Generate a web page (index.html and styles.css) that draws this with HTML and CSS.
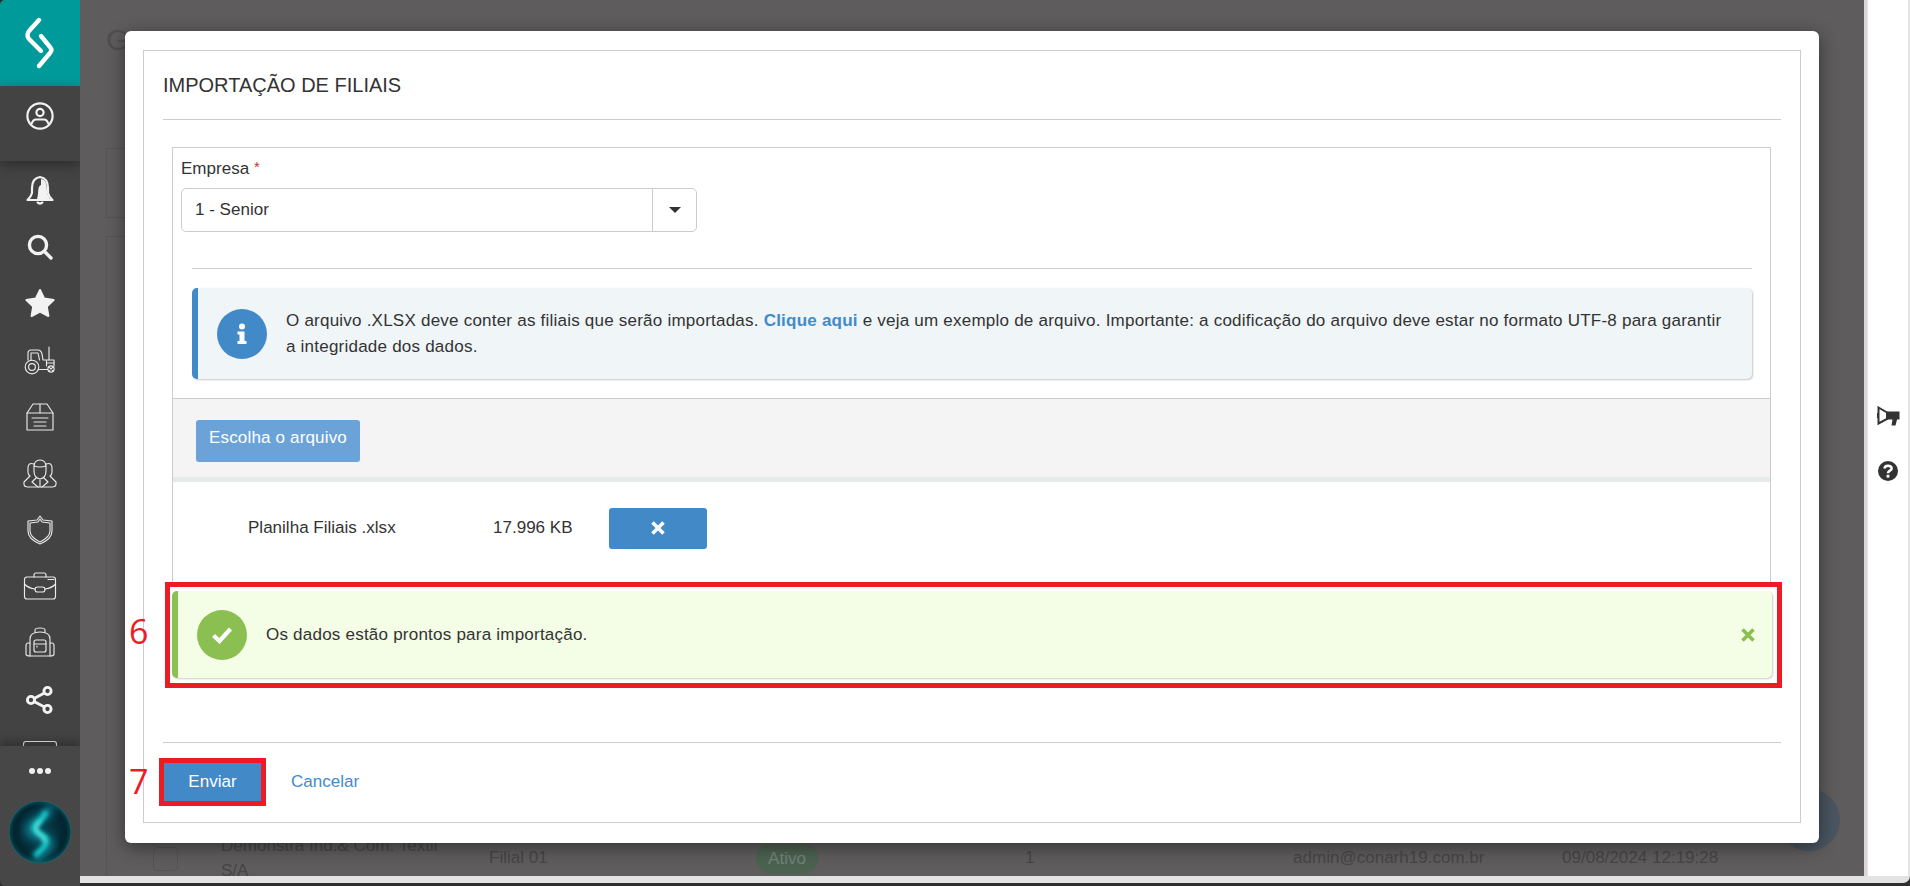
FILE: index.html
```html
<!DOCTYPE html>
<html lang="pt-BR">
<head>
<meta charset="utf-8">
<title>Importação de Filiais</title>
<link rel="stylesheet" href="styles.css">
</head>
<body>
<div class="window">
  <aside class="sidebar">
    <a class="brand">
      <svg width="40" height="56" viewBox="0 0 40 56"><path class="logo-line" d="M19 5 L9 16 Q6 20 9 24 L21 36"/><path class="logo-line" d="M21 21 L30 32 Q33 35 30 38 L19 51"/></svg>
    </a>
    <div class="profile">
      <svg width="30" height="30" viewBox="0 0 30 30"><circle class="ln2" cx="15" cy="15" r="12.6"/><circle class="ln2" cx="15" cy="11.5" r="3.6"/><path class="ln2" d="M6.5 23 Q8 18.5 11 18.5 H19 Q22 18.5 23.5 23"/></svg>
    </div>
    <nav class="nav">
      <div class="nav-item"><svg width="40" height="40" viewBox="0 0 40 40"><path class="ln2" d="M20 7 C26 8 28 12 28 18 V23 Q29 27 32.5 30 H7.5 Q11 27 12 23 V18 C12 12 14 8 20 7 Z"/><path class="fl" d="M21 9 C26 10 27 14 27 23 Q28 26 30 29 H17 C19 24 17 16 21 15 Z"/><path class="ln2" d="M17 32 Q20 35 23 32"/></svg></div>
      <div class="nav-item"><svg width="40" height="40" viewBox="0 0 40 40"><circle class="ln3" cx="18" cy="18" r="8.6"/><path class="ln3" d="M24.5 24.5 L31 31"/></svg></div>
      <div class="nav-item"><svg width="40" height="40" viewBox="0 0 40 40"><path class="fl star" d="M20 7 L24.2 15.6 L33.6 17 L26.8 23.6 L28.4 33 L20 28.6 L11.6 33 L13.2 23.6 L6.4 17 L15.8 15.6 Z"/></svg></div>
      <div class="nav-item"><svg width="40" height="40" viewBox="0 0 40 40"><g class="ln1"><circle cx="12" cy="27" r="6.8"/><circle cx="12" cy="27" r="3.4"/><circle cx="31" cy="29" r="3.1"/><path d="M28.8 26.8 L33.2 31.2 M33.2 26.8 L28.8 31.2"/><path d="M8 20 V13 Q8 10 11 10 H18 Q21 10 22 14 L23 20 H34 V26"/><path d="M11 20 V13 H18 L19.5 20 M19 29.5 H27.5"/><path d="M29 20 V7 M26.5 23 H34 M26.5 20.5 V26"/></g></svg></div>
      <div class="nav-item"><svg width="40" height="40" viewBox="0 0 40 40"><g class="ln1"><path d="M7 16 L13 7 H27 L33 16 V33 H7 Z"/><path d="M7 16 H33 M20 7 V16"/><path d="M12 21 H28 M14 25 H26 M14 29 H26"/></g></svg></div>
      <div class="nav-item"><svg width="40" height="40" viewBox="0 0 40 40"><g class="ln1"><path d="M14 14 Q14 7 20 7 Q26 7 26 14 V18 Q26 25 20 26 Q14 25 14 18 Z"/><path d="M14 13 Q20 15 26 13"/><path d="M14 11 Q8 9 8 15 V19 Q8 22 10 23 L4 29 V31 Q4 34 8 34 H32 Q36 34 36 31 V29 L30 23 Q32 22 32 19 V15 Q32 9 26 11"/><path d="M16 25 L12 29 L18 34 M24 25 L28 29 L22 34 M20 27 V34"/></g></svg></div>
      <div class="nav-item"><svg width="40" height="40" viewBox="0 0 40 40"><g class="ln1"><path d="M20 6 L23 10 L32 11 V21 Q32 29 20 34 Q8 29 8 21 V11 L17 10 Z"/><path d="M20 9 L22 12 L30 13 V21 Q30 27 20 32 Q10 27 10 21 V13 L18 12 Z"/></g></svg></div>
      <div class="nav-item"><svg width="40" height="40" viewBox="0 0 40 40"><g class="ln1"><rect x="4.5" y="11" width="31" height="22" rx="2.5"/><path d="M14 11 V9 Q14 7 16 7 H24 Q26 7 26 9 V11"/><path d="M4.5 18 Q8 22 15 23 M35.5 18 Q32 22 25 23"/><rect x="15" y="21" width="10" height="5" rx="2.5"/><path d="M28 13.5 H34"/></g></svg></div>
      <div class="nav-item"><svg width="40" height="40" viewBox="0 0 40 40"><g class="ln1"><path d="M10 33 V16 Q10 9 20 9 Q30 9 30 16 V33 Z"/><path d="M15 9 V7 Q15 5 20 5 Q25 5 25 7 V9"/><path d="M10 20 H8 Q6 20 6 23 V31 Q6 33 10 33 M30 20 H32 Q34 20 34 23 V31 Q34 33 30 33"/><rect x="14" y="17" width="12" height="12" rx="2"/><path d="M14 21 H26 M17 23 V24"/></g></svg></div>
      <div class="nav-item"><svg width="40" height="40" viewBox="0 0 40 40"><g class="ln3s"><circle cx="27.5" cy="11" r="3.6"/><circle cx="11" cy="20" r="3.6"/><circle cx="27.5" cy="29" r="3.6"/><path d="M24.5 13 L14 18.5 M14 21.5 L24.5 27"/></g></svg></div>
      <div class="nav-item"><svg width="40" height="40" viewBox="0 0 40 40"><g class="ln1"><rect x="3.5" y="5.5" width="33" height="24" rx="2.5"/></g></svg></div>
    </nav>
    <div class="sidebar-foot">
      <div class="dots"><span class="dot"></span><span class="dot"></span><span class="dot"></span></div>
      <svg class="orb" width="62" height="62" viewBox="0 0 62 62">
        <defs>
          <radialGradient id="orbfill" cx="50%" cy="50%" r="50%"><stop offset="0" stop-color="#07404e"/><stop offset=".85" stop-color="#03242f"/><stop offset=".97" stop-color="#04424c"/><stop offset="1" stop-color="#09737e"/></radialGradient>
          <filter id="soft" x="-40%" y="-40%" width="180%" height="180%"><feGaussianBlur stdDeviation="2"/></filter>
          <filter id="softer" x="-40%" y="-40%" width="180%" height="180%"><feGaussianBlur stdDeviation="4"/></filter>
          <clipPath id="orbclip"><circle cx="31" cy="31" r="31"/></clipPath>
        </defs>
        <circle cx="31" cy="31" r="31" fill="url(#orbfill)"/>
        <g clip-path="url(#orbclip)" fill="none">
          <path d="M40 4 C44 16 18 20 20 30 C22 38 46 34 40 46 C38 52 30 54 25 60" stroke="#0b6f80" stroke-width="10" filter="url(#softer)"/>
          <path d="M36 10 C38 18 23 22 25 28 C27 34 40 34 37 42 C35 48 30 50 26 55" stroke="#15d6d4" stroke-width="5" filter="url(#soft)"/>
          <path d="M32 20 C28 24 26 26 28 30 C30 34 36 35 35 41" stroke="#8ffff2" stroke-width="2" filter="url(#soft)"/>
        </g>
      </svg>
    </div>
  </aside>

  <div class="stage">
    <div class="stage-row">
      <main class="main">
        <div class="bg-heading">G</div>
        <div class="bg-card bg-card-top"></div>
        <div class="bg-card bg-card-list">
          <div class="bg-row">
            <span class="bg-check"></span>
            <span class="bg-name">Demonstra Ind.&amp; Com. Textil S/A</span>
            <span class="bg-branch">Filial 01</span>
            <span class="bg-pill">Ativo</span>
            <span class="bg-count">1</span>
            <span class="bg-mail">admin@conarh19.com.br</span>
            <span class="bg-date">09/08/2024 12:19:28</span>
          </div>
        </div>
        <div class="bg-fab"></div>

        <section class="modal">
          <div class="modal-box">
            <h1 class="modal-title">IMPORTAÇÃO DE FILIAIS</h1>

            <div class="panel">
              <div class="form">
                <label class="field-label">Empresa <span class="req">*</span></label>
                <div class="select">
                  <span class="select-value">1 - Senior</span>
                  <span class="select-toggle"><span class="caret"></span></span>
                </div>
                <hr class="form-rule">
                <div class="notice notice-info">
                  <span class="notice-icon icon-info">
                    <svg width="14" height="22" viewBox="0 0 14 22"><circle cx="7" cy="3.5" r="3" fill="#fff"/><path fill="#fff" d="M2.5 8.5 H9.5 V18 H11.5 V21 H2.5 V18 H4.5 V11.5 H2.5 Z"/></svg>
                  </span>
                  <p class="notice-text">O arquivo .XLSX deve conter as filiais que serão importadas. <a class="strong-link">Clique aqui</a> e veja um exemplo de arquivo. Importante: a codificação do arquivo deve estar no formato UTF-8 para garantir a integridade dos dados.</p>
                </div>
              </div>
              <div class="upload-bar"><button class="btn-choose">Escolha o arquivo</button></div>
              <div class="file-row">
                <span class="file-name">Planilha Filiais .xlsx</span>
                <span class="file-size">17.996 KB</span>
                <button class="btn-remove"><svg width="14" height="14" viewBox="0 0 14 14"><path d="M1.5 1.5 L12.5 12.5 M12.5 1.5 L1.5 12.5" stroke="#fff" stroke-width="3.6" fill="none"/></svg></button>
              </div>
            </div>

            <div class="highlight">
              <span class="step step-six">6</span>
              <div class="notice notice-ok">
                <span class="notice-icon icon-ok">
                  <svg width="24" height="20" viewBox="0 0 24 20"><path d="M3.5 10.5 L9.5 16 L20.5 4" stroke="#fff" stroke-width="4.2" fill="none"/></svg>
                </span>
                <p class="notice-text">Os dados estão prontos para importação.</p>
                <svg class="notice-close" width="14" height="14" viewBox="0 0 14 14"><path d="M1.5 1.5 L12.5 12.5 M12.5 1.5 L1.5 12.5" stroke="#8cbf52" stroke-width="3.6" fill="none"/></svg>
              </div>
            </div>

            <div class="modal-foot">
              <div class="highlight-btn">
                <span class="step step-seven">7</span>
                <button class="btn-send">Enviar</button>
              </div>
              <a class="link-cancel">Cancelar</a>
            </div>
          </div>
        </section>
      </main>
      <aside class="rail">
        <svg width="24" height="20" viewBox="0 0 24 20"><path d="M2.5 1.5 L11 6.5 V13 L2.5 17.5 Z" fill="none" stroke="#333" stroke-width="2"/><path d="M1 7 H3 V12 H1 Z" fill="#333"/><path d="M11 5.5 H23.5 V13.5 H21 L19.5 19.5 H15.5 L16.5 13.5 H11 Z" fill="#333"/></svg>
        <svg width="22" height="22" viewBox="0 0 22 22"><circle cx="11" cy="11" r="10" fill="#333"/><path d="M7.6 8.6 C7.6 4.8 14.6 4.8 14.6 8.4 C14.6 10.8 11 10.6 11 13.2" fill="none" stroke="#fff" stroke-width="2.6"/><rect x="9.6" y="14.8" width="2.8" height="2.8" fill="#fff"/></svg>
      </aside>
    </div>
    <div class="stage-strip"></div>
  </div>
</div>
</body>
</html>
```
FILE: styles.css
```css
* { box-sizing: border-box; }
html, body { margin: 0; padding: 0; height: 100%; }
body {
  background: #2f2f2f;
  font-family: "Liberation Sans", Arial, sans-serif;
  font-size: 17.05px;
  color: #333;
  overflow: hidden;
}
.window { display: flex; width: 1910px; height: 886px; }

/* sidebar */
.sidebar {
  flex: 0 0 80px;
  display: flex;
  flex-direction: column;
  background: #434343;
  border-radius: 5px 0 0 6px;
  overflow: hidden;
}
.brand {
  flex: 0 0 86px;
  display: flex;
  align-items: center;
  justify-content: center;
  background: #009a9a;
}
.logo-line { fill: none; stroke: #fff; stroke-width: 4.4; stroke-linecap: round; stroke-linejoin: round; }
.profile {
  flex: 0 0 75px;
  display: flex;
  justify-content: center;
  padding-top: 15px;
  background: #434343;
  box-shadow: 0 4px 12px rgba(0,0,0,.35);
  position: relative;
  z-index: 1;
}
.ln1 { fill: none; stroke: #e9e9ec; stroke-width: 1.15; stroke-linecap: round; stroke-linejoin: round; }
.ln2 { fill: none; stroke: #f2f2f2; stroke-width: 2.2; stroke-linejoin: round; }
.ln3 { fill: none; stroke: #f2f2f2; stroke-width: 3.4; stroke-linecap: round; }
.ln3s { fill: none; stroke: #f2f2f2; stroke-width: 2.9; }
.fl { fill: #f2f2f2; }
.star { stroke: #f2f2f2; stroke-width: 2; stroke-linejoin: round; }
.nav {
  flex: 0 0 585px;
  padding-top: 1px;
  overflow: hidden;
}
.nav-item {
  height: 56.6px;
  display: flex;
  align-items: center;
  justify-content: center;
}
.sidebar-foot {
  flex: 1;
  display: flex;
  flex-direction: column;
  align-items: center;
  background: #474747;
  box-shadow: 0 -4px 10px rgba(0,0,0,.3);
  position: relative;
  padding-top: 22px;
}
.dots { display: flex; gap: 2px; height: 6px; }
.dot { width: 6px; height: 6px; border-radius: 50%; background: #f0f0f0; }
.orb { margin-top: 27px; }

/* stage */
.stage { flex: 1; display: flex; flex-direction: column; height: 883px; background: #e3e3e3; border-radius: 0 0 7px 0; }
.stage-row { flex: 1; display: flex; min-height: 0; }
.stage-strip { flex: 0 0 7px; }

.main { flex: 0 0 1787px; position: relative; background: #5e5c5d; overflow: hidden; border-right: 3px solid #d8d8d8; }
.rail {
  flex: 1;
  margin: 0 2px 0 1px;
  background: #fff;
  display: flex;
  flex-direction: column;
  align-items: center;
  gap: 34px;
  padding-top: 406px;
}

/* dim page behind the modal */
.bg-heading { position: absolute; left: 26px; top: 22px; font-size: 30px; line-height: 36px; color: #504e4f; }
.bg-card { position: absolute; left: 26px; right: 60px; border: 1px solid #565455; border-right: 0; }
.bg-card-top { top: 148px; height: 70px; }
.bg-card-list { top: 236px; bottom: -4px; }
.bg-row { position: absolute; left: 0; right: 0; top: 606px; color: #474546; }
.bg-row > span { position: absolute; }
.bg-check { left: 46px; top: 4px; width: 25px; height: 24px; border: 1px solid #555354; border-radius: 4px; }
.bg-name { left: 114px; top: -10px; width: 235px; line-height: 25px; }
.bg-branch { left: 382px; top: 5px; }
.bg-pill { left: 649px; top: 1px; width: 62px; height: 30px; border-radius: 15px; background: #4c6251; color: #738478; text-align: center; line-height: 30px; }
.bg-count { left: 918px; top: 5px; }
.bg-mail { left: 1186px; top: 5px; }
.bg-date { left: 1455px; top: 5px; white-space: nowrap; }
.bg-fab { position: absolute; left: 1698px; top: 789px; width: 62px; height: 62px; border-radius: 50%; background: #4a5561; }

/* modal */
.modal {
  position: absolute;
  left: 45px;
  top: 31px;
  width: 1694px;
  height: 812px;
  padding: 19px 18px 20px;
  background: #fff;
  border-radius: 6px;
  box-shadow: 0 4px 18px rgba(0,0,0,.45);
}
.modal-box {
  height: 100%;
  display: flex;
  flex-direction: column;
  padding: 0 19px;
  border: 1px solid #ccc;
}
.modal-title {
  margin: 0;
  height: 69px;
  display: flex;
  align-items: center;
  font-size: 20px;
  font-weight: 400;
  color: #333;
  border-bottom: 1px solid #ccc;
}
.panel {
  margin: 27px 10px 0 9px;
  height: 435px;
  border: 1px solid #ccc;
  border-bottom: 0;
  display: flex;
  flex-direction: column;
}
.form { padding: 10px 18px 19px 8px; border-bottom: 1px solid #ccc; }
.field-label { display: block; height: 22px; line-height: 22px; margin-bottom: 8px; }
.req { color: #c9302c; font-size: 15px; position: relative; top: -2px; }
.select {
  width: 516px;
  height: 44px;
  display: flex;
  border: 1px solid #ccc;
  border-radius: 5px;
  background: #fff;
}
.select-value { flex: 1; padding-left: 13px; line-height: 41px; }
.select-toggle {
  flex: 0 0 44px;
  display: flex;
  align-items: center;
  justify-content: center;
  border-left: 1px solid #ccc;
}
.caret { width: 0; height: 0; border-style: solid; border-width: 6px 6px 0; border-color: #333 transparent transparent; }
.form-rule { margin: 36px 0 19px 11px; border: 0; border-top: 1px solid #ccc; height: 0; }
.notice { display: flex; align-items: center; }
.notice-info {
  margin-left: 11px;
  height: 91px;
  padding: 0 26px 0 19px;
  background: #f0f5f8;
  border-left: 6px solid #4189c7;
  border-radius: 5px;
  box-shadow: 1px 1px 2px rgba(0,0,0,.22);
}
.notice-icon { flex: 0 0 50px; height: 50px; border-radius: 50%; display: flex; align-items: center; justify-content: center; margin-right: 19px; }
.icon-info { background: #4189c7; }
.icon-ok { background: #8cbf52; }
.notice-text { margin: 0; line-height: 26px; letter-spacing: .21px; }
.strong-link { color: #428bca; font-weight: 700; }

.upload-bar { flex: 0 0 83px; padding: 21px 23px 0; background: #f4f4f4; border-bottom: 5px solid #e6ebea; }
.btn-choose {
  display: block;
  width: 164px;
  height: 42px;
  padding: 0 0 6px;
  border: 0;
  border-radius: 3px;
  background: #6ba3d8;
  color: #fff;
  font: inherit;
  letter-spacing: .15px;
}
.file-row { flex: 1; display: flex; align-items: center; padding-left: 75px; padding-bottom: 8px; }
.file-name { flex: 0 0 245px; }
.file-size { flex: 0 0 116px; }
.btn-remove {
  width: 98px;
  height: 41px;
  padding: 0;
  border: 0;
  border-radius: 3px;
  background: #4189c7;
  display: flex;
  align-items: center;
  justify-content: center;
}

.highlight {
  position: relative;
  height: 106px;
  margin: 0 -1px 0 2px;
  padding: 4px 5px 5px 2px;
  border: 5px solid #ed1c24;
}
.notice-ok {
  height: 87px;
  padding: 0 17px 0 19px;
  background: #f4fde6;
  border-left: 6px solid #8bc152;
  border-radius: 5px;
  box-shadow: 1px 1px 2px rgba(0,0,0,.2);
}
.notice-ok .notice-text { flex: 1; }
.step { position: absolute; font-family: "Open Sans", sans-serif; font-size: 34px; line-height: 40px; color: #ed1c24; }
.step-six { left: -41px; top: 24px; }
.step-seven { left: -35px; top: -2px; }

.modal-foot {
  margin-top: 54px;
  padding-top: 15px;
  border-top: 1px solid #ccc;
  display: flex;
  align-items: center;
}
.highlight-btn { position: relative; margin-left: -4px; padding: 0; border: 5px solid #ed1c24; }
.btn-send {
  display: block;
  width: 97px;
  height: 38px;
  padding: 0;
  border: 0;
  background: #4189c7;
  color: #fff;
  font: inherit;
}
.link-cancel { margin-left: 25px; color: #428bca; }
```
